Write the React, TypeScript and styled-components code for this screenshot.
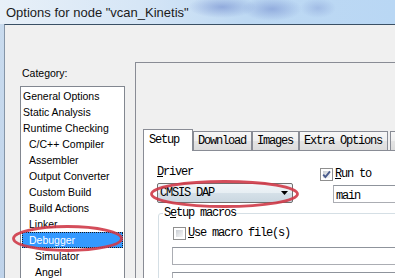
import React from 'react';
import styled, { createGlobalStyle } from 'styled-components';

const GlobalStyle = createGlobalStyle`
  html, body {
    margin: 0;
    padding: 0;
    background: #f0f0f0;
  }
  body {
    font-family: "Liberation Sans", Arial, sans-serif;
  }
`;

const MONO = `"Liberation Mono", "Courier New", monospace`;

const Window = styled.div`
  position: relative;
  width: 395px;
  height: 278px;
  overflow: hidden;
  display: flex;
  flex-direction: column;
  background: #f0f0f0;
`;

const TitleBar = styled.div`
  height: 24px;
  flex: none;
  display: flex;
  align-items: center;
  padding-left: 6px;
  background:
    radial-gradient(ellipse 34px 11px at 222px 7px, rgba(112, 138, 205, 0.6), transparent),
    radial-gradient(ellipse 30px 12px at 272px 9px, rgba(112, 138, 205, 0.55), transparent),
    radial-gradient(ellipse 18px 10px at 318px 8px, rgba(130, 155, 212, 0.45), transparent),
    linear-gradient(90deg, #e8f0f8 0%, #d6e6f6 35%, #bed9f3 62%, #b9d7f4 100%);
`;

const Title = styled.span`
  font-size: 13px;
  color: #1b1b1b;
  white-space: nowrap;
`;

const Body = styled.div`
  flex: 1;
  min-height: 0;
  display: flex;
`;

const FrameEdge = styled.div`
  width: 4px;
  flex: none;
  background: linear-gradient(180deg, #c9dbee, #bfd3ea);
`;

const Client = styled.div`
  flex: 1;
  min-width: 0;
  display: flex;
  align-items: flex-start;
  overflow: hidden;
  background: #f0f0f0;
  border-top: 1px solid #3a5065;
  border-left: 1px solid #8595a7;
`;

const CategoryPanel = styled.div`
  flex: none;
  width: 120px;
  box-sizing: border-box;
  padding: 41px 0 0 15px;
  display: flex;
  flex-direction: column;
`;

const CategoryLabel = styled.div`
  font-size: 10.5px;
  line-height: 14px;
  color: #000;
  padding-left: 2px;
  margin-bottom: 6px;
`;

const ListBox = styled.div`
  width: 105px;
  height: 200px;
  box-sizing: border-box;
  border: 1px solid #828790;
  background: #fff;
  padding: 1px;
`;

const ListItem = styled.div<{ $depth: number; $selected?: boolean }>`
  height: 16px;
  line-height: 16px;
  font-size: 10.5px;
  white-space: nowrap;
  padding-left: ${p => 1 + p.$depth * 6}px;
  color: ${p => (p.$selected ? '#fff' : '#000')};
  background: ${p => (p.$selected ? '#3399ff' : 'transparent')};
  outline: ${p => (p.$selected ? '1px dotted #1a1a1a' : 'none')};
  outline-offset: -1px;
`;

const SettingsPanel = styled.div`
  flex: none;
  width: 300px;
  height: 260px;
  box-sizing: border-box;
  margin: 37px 0 0 10px;
  border: 1px solid #898c95;
  padding: 66px 0 0 7px;
  display: flex;
  flex-direction: column;
`;

const TabStrip = styled.div`
  display: flex;
  align-items: flex-end;
  height: 21px;
  flex: none;
`;

const TAB_GRADIENT = 'linear-gradient(180deg, #f7f7f7 0%, #efefef 50%, #e4e4e4 51%, #dcdcdc 100%)';

const Tab = styled.div<{ $active?: boolean }>`
  box-sizing: border-box;
  flex: none;
  font-family: ${MONO};
  font-size: 12px;
  letter-spacing: -1.2px;
  color: #000;
  white-space: nowrap;
  border: 1px solid #898c95;
  border-bottom: none;
  height: ${p => (p.$active ? 22 : 19)}px;
  line-height: ${p => (p.$active ? 20 : 18)}px;
  padding: ${p => (p.$active ? '0 5px 0 5px' : '0 5px 0 4px')};
  min-width: ${p => (p.$active ? 50 : 0)}px;
  margin-bottom: ${p => (p.$active ? -1 : 0)}px;
  position: relative;
  z-index: ${p => (p.$active ? 1 : 0)};
  background: ${p => (p.$active ? '#ffffff' : TAB_GRADIENT)};
`;

/* the next tab, mostly past the right edge of the shot */
const TabStub = styled.div`
  flex: none;
  width: 12px;
  height: 19px;
  box-sizing: border-box;
  margin-left: 2px;
  border: 1px solid #898c95;
  border-bottom: none;
  background: ${TAB_GRADIENT};
`;

const TabPage = styled.div`
  width: 290px;
  height: 200px;
  box-sizing: border-box;
  background: #fff;
  border: 1px solid #898c95;
  padding: 15px 0 0 13px;
`;

const MonoText = styled.span`
  font-family: ${MONO};
  font-size: 12px;
  letter-spacing: -1.2px;
  color: #000;
  white-space: nowrap;
`;

const Mnemonic = styled.span`
  text-decoration: underline;
  text-underline-offset: 1px;
`;

const TopRow = styled.div`
  display: flex;
  align-items: flex-start;
`;

const DriverColumn = styled.div`
  width: 136px;
  display: flex;
  flex-direction: column;
`;

const FieldLabel = styled(MonoText)`
  display: block;
  height: 12px;
  line-height: 12px;
  margin-bottom: 5px;
`;

const Combo = styled.div`
  height: 20px;
  box-sizing: border-box;
  border: 1px solid #707070;
  border-radius: 2px;
  padding: 0 4px 0 2px;
  display: flex;
  align-items: center;
  justify-content: space-between;
  background: linear-gradient(180deg, #f1f5f8 0%, #e7eef3 48%, #d5e0e8 52%, #cad7e1 100%);
`;

const RunColumn = styled.div`
  margin-left: 27px;
  padding-top: 2px;
  display: flex;
  flex-direction: column;
  gap: 4px;
`;

const CheckRow = styled.div<{ $indent?: number; $top?: number }>`
  display: flex;
  align-items: center;
  gap: 2px;
  height: 13px;
  line-height: 13px;
  margin-left: ${p => p.$indent ?? 0}px;
  margin-top: ${p => p.$top ?? 0}px;
`;

const Box = styled.span`
  width: 13px;
  height: 13px;
  box-sizing: border-box;
  flex: none;
  border: 1px solid #8f8f8f;
  padding: 2px;
  position: relative;
  background:
    linear-gradient(135deg, #c9cdd3 0%, #e6e8ea 60%, #f6f6f6 100%) content-box,
    #ffffff;
  svg {
    position: absolute;
    left: -1px;
    top: -1px;
  }
`;

const TextField = styled.div<{ $width: number; $indent?: number }>`
  width: ${p => p.$width}px;
  height: 18px;
  box-sizing: border-box;
  border: 1px solid #abadb3;
  border-top-color: #8f949c;
  background: #fff;
  padding-left: 2px;
  line-height: 16px;
  margin-left: ${p => p.$indent ?? 0}px;
`;

const GroupBox = styled.fieldset`
  width: 260px;
  height: 120px;
  box-sizing: border-box;
  margin: 4px 0 0 1px;
  padding: 0 0 0 4px;
  border: 1px solid #d5dfe5;
  border-radius: 3px;
  display: flex;
  flex-direction: column;
  gap: 7px;
`;

const Legend = styled.legend`
  padding: 0 1px;
  font-family: ${MONO};
  font-size: 12px;
  letter-spacing: -1.2px;
  line-height: 12px;
  color: #000;
`;

const Overlay = styled.svg`
  position: absolute;
  left: 0;
  top: 0;
  pointer-events: none;
`;

const Checkbox = ({ checked }: { checked?: boolean }) => (
  <Box>
    {checked && (
      <svg width="13" height="13" viewBox="0 0 13 13">
        <path d="M3.2 6.6 L5.4 9 L10 3.4" fill="none" stroke="#4b5d8e" strokeWidth="1.9" />
      </svg>
    )}
  </Box>
);

const DropArrow = () => (
  <svg width="7" height="4" viewBox="0 0 7 4">
    <polygon points="0,0 7,0 3.5,4" fill="#000" />
  </svg>
);

const categories: { name: string; depth: number }[] = [
  { name: 'General Options', depth: 0 },
  { name: 'Static Analysis', depth: 0 },
  { name: 'Runtime Checking', depth: 0 },
  { name: 'C/C++ Compiler', depth: 1 },
  { name: 'Assembler', depth: 1 },
  { name: 'Output Converter', depth: 1 },
  { name: 'Custom Build', depth: 1 },
  { name: 'Build Actions', depth: 1 },
  { name: 'Linker', depth: 1 },
  { name: 'Debugger', depth: 1 },
  { name: 'Simulator', depth: 2 },
  { name: 'Angel', depth: 2 },
];

const tabs = ['Setup', 'Download', 'Images', 'Extra Options'];

const App: React.FC = () => {
  const selected = 'Debugger';
  const activeTab = 'Setup';

  return (
    <Window>
      <GlobalStyle />
      <TitleBar>
        <Title>Options for node "vcan_Kinetis"</Title>
      </TitleBar>
      <Body>
        <FrameEdge />
        <Client>
          <CategoryPanel>
            <CategoryLabel>Category:</CategoryLabel>
            <ListBox>
              {categories.map(c => (
                <ListItem key={c.name} $depth={c.depth} $selected={c.name === selected}>
                  {c.name}
                </ListItem>
              ))}
            </ListBox>
          </CategoryPanel>

          <SettingsPanel>
            <TabStrip>
              {tabs.map(t => (
                <Tab key={t} $active={t === activeTab}>
                  {t}
                </Tab>
              ))}
              <TabStub />
            </TabStrip>
            <TabPage>
              <TopRow>
                <DriverColumn>
                  <FieldLabel>
                    <Mnemonic>D</Mnemonic>river
                  </FieldLabel>
                  <Combo>
                    <MonoText>CMSIS DAP</MonoText>
                    <DropArrow />
                  </Combo>
                </DriverColumn>
                <RunColumn>
                  <CheckRow>
                    <Checkbox checked />
                    <MonoText>
                      <Mnemonic>R</Mnemonic>un to
                    </MonoText>
                  </CheckRow>
                  <TextField $width={80} $indent={13}>
                    <MonoText>main</MonoText>
                  </TextField>
                </RunColumn>
              </TopRow>

              <GroupBox>
                <Legend>
                  S<Mnemonic>e</Mnemonic>tup macros
                </Legend>
                <CheckRow $indent={10} $top={8}>
                  <Checkbox />
                  <MonoText>
                    <Mnemonic>U</Mnemonic>se macro file(s)
                  </MonoText>
                </CheckRow>
                <TextField $width={240} $indent={9} />
                <TextField $width={240} $indent={9} />
              </GroupBox>
            </TabPage>
          </SettingsPanel>
        </Client>
      </Body>

      <Overlay width="395" height="278" viewBox="0 0 395 278">
        <ellipse cx="67.5" cy="238.5" rx="54" ry="12" fill="none" stroke="#cf3a48" strokeWidth="2.8" opacity="0.9" />
        <ellipse cx="224.5" cy="194" rx="73" ry="12.5" fill="none" stroke="#cf3a48" strokeWidth="2.8" opacity="0.9" />
      </Overlay>
    </Window>
  );
};

export default App;
